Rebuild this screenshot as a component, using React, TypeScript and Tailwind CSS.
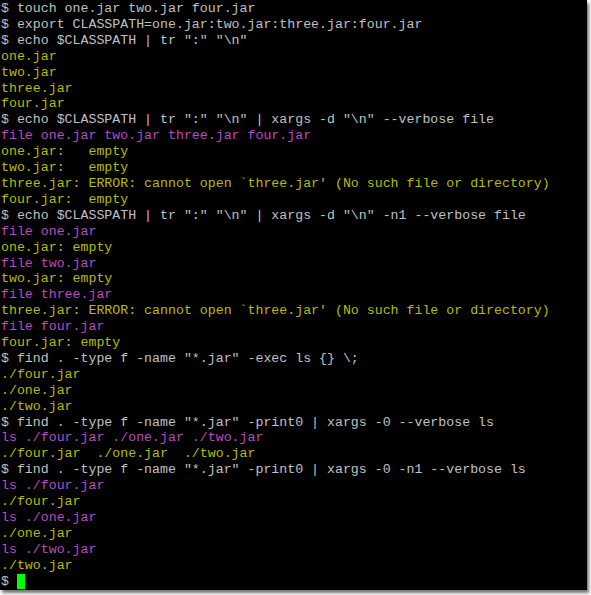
type Line = { t: string; c: "g" | "y" | "m" };

const lines: Line[] = [
  { t: "$ touch one.jar two.jar four.jar", c: "g" },
  { t: "$ export CLASSPATH=one.jar:two.jar:three.jar:four.jar", c: "g" },
  { t: '$ echo $CLASSPATH | tr ":" "\\n"', c: "g" },
  { t: "one.jar", c: "y" },
  { t: "two.jar", c: "y" },
  { t: "three.jar", c: "y" },
  { t: "four.jar", c: "y" },
  { t: '$ echo $CLASSPATH | tr ":" "\\n" | xargs -d "\\n" --verbose file', c: "g" },
  { t: "file one.jar two.jar three.jar four.jar", c: "m" },
  { t: "one.jar:   empty", c: "y" },
  { t: "two.jar:   empty", c: "y" },
  { t: "three.jar: ERROR: cannot open `three.jar' (No such file or directory)", c: "y" },
  { t: "four.jar:  empty", c: "y" },
  { t: '$ echo $CLASSPATH | tr ":" "\\n" | xargs -d "\\n" -n1 --verbose file', c: "g" },
  { t: "file one.jar", c: "m" },
  { t: "one.jar: empty", c: "y" },
  { t: "file two.jar", c: "m" },
  { t: "two.jar: empty", c: "y" },
  { t: "file three.jar", c: "m" },
  { t: "three.jar: ERROR: cannot open `three.jar' (No such file or directory)", c: "y" },
  { t: "file four.jar", c: "m" },
  { t: "four.jar: empty", c: "y" },
  { t: '$ find . -type f -name "*.jar" -exec ls {} \\;', c: "g" },
  { t: "./four.jar", c: "y" },
  { t: "./one.jar", c: "y" },
  { t: "./two.jar", c: "y" },
  { t: '$ find . -type f -name "*.jar" -print0 | xargs -0 --verbose ls', c: "g" },
  { t: "ls ./four.jar ./one.jar ./two.jar", c: "m" },
  { t: "./four.jar  ./one.jar  ./two.jar", c: "y" },
  { t: '$ find . -type f -name "*.jar" -print0 | xargs -0 -n1 --verbose ls', c: "g" },
  { t: "ls ./four.jar", c: "m" },
  { t: "./four.jar", c: "y" },
  { t: "ls ./one.jar", c: "m" },
  { t: "./one.jar", c: "y" },
  { t: "ls ./two.jar", c: "m" },
  { t: "./two.jar", c: "y" },
];

const color = {
  g: "text-[#c0c0c0]",
  y: "text-[#b8bc00]",
  m: "text-[#b84cc4]",
};

export default function App() {
  return (
    <div className="w-[591px] h-[595px] bg-white">
      <div
        className="w-[587px] h-[590px] bg-black pl-[1px] pt-[1px] shadow-[2px_3px_3px_rgba(0,0,0,0.55)] overflow-hidden"
        style={{ fontFamily: '"Liberation Mono", "Courier New", monospace' }}
      >
        <div className="text-[13.25px] leading-[15.9px] whitespace-pre">
          {lines.map((l, i) => (
            <div key={i} className={color[l.c]}>
              {l.t}
            </div>
          ))}
          <div className="flex items-center text-[#c0c0c0]">
            <span>$ </span>
            <span className="inline-block w-[8px] h-[15px] bg-[#00ff00]" />
          </div>
        </div>
      </div>
    </div>
  );
}
